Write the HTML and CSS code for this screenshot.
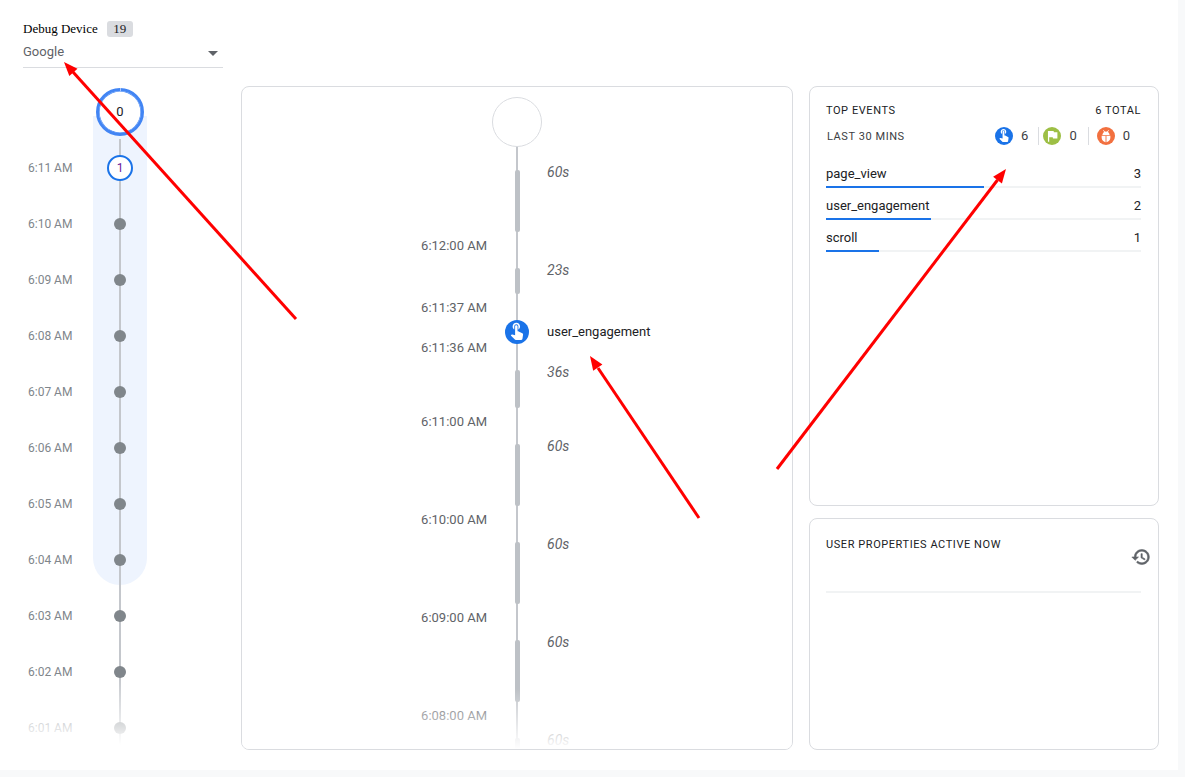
FILE: index.html
```html
<!DOCTYPE html>
<html lang="en">
<head>
<meta charset="utf-8">
<title>DebugView</title>
<link rel="stylesheet" href="styles.css">
</head>
<body>
<main class="page">
  <aside class="side">
    <div class="device-label"><span>Debug Device</span><span class="badge">19</span></div>
    <div class="device-select"><span>Google</span><span class="caret"></span></div>
    <div class="minutes">
      <div class="minute"><span class="min-time"></span><div class="min-rail band-first"><span class="zero">0</span></div></div>
      <div class="minute"><span class="min-time">6:11 AM</span><div class="min-rail band"><span class="one">1</span></div></div>
      <div class="minute"><span class="min-time">6:10 AM</span><div class="min-rail band"><span class="dot"></span></div></div>
      <div class="minute"><span class="min-time">6:09 AM</span><div class="min-rail band"><span class="dot"></span></div></div>
      <div class="minute"><span class="min-time">6:08 AM</span><div class="min-rail band"><span class="dot"></span></div></div>
      <div class="minute"><span class="min-time">6:07 AM</span><div class="min-rail band"><span class="dot"></span></div></div>
      <div class="minute"><span class="min-time">6:06 AM</span><div class="min-rail band"><span class="dot"></span></div></div>
      <div class="minute"><span class="min-time">6:05 AM</span><div class="min-rail band"><span class="dot"></span></div></div>
      <div class="minute"><span class="min-time">6:04 AM</span><div class="min-rail band-last"><span class="dot"></span></div></div>
      <div class="minute"><span class="min-time">6:03 AM</span><div class="min-rail"><span class="dot"></span></div></div>
      <div class="minute"><span class="min-time">6:02 AM</span><div class="min-rail"><span class="dot"></span></div></div>
      <div class="minute"><span class="min-time">6:01 AM</span><div class="min-rail"><span class="dot"></span></div></div>
    </div>
  </aside>

  <section class="card stream">
    <div class="start"><span class="start-circle"></span></div>
    <div class="seg seg-60"><span class="stamp">6:12:00 AM</span><div class="rail"><span class="bar"></span></div><span class="dur">60s</span></div>
    <div class="seg seg-23"><span class="stamp">6:11:37 AM</span><div class="rail"><span class="bar"></span></div><span class="dur">23s</span></div>
    <div class="seg seg-event"><span class="stamp">6:11:36 AM</span><div class="rail">
      <svg class="event-icon" viewBox="0 0 24 24"><circle cx="12" cy="12" r="12" fill="#1a73e8"/><g transform="translate(1.9 .24) scale(.82)"><path fill="#fff" d="M9 11.24V7.5C9 6.12 10.12 5 11.5 5S14 6.12 14 7.5v3.74c1.21-.81 2-2.18 2-3.74C16 5.01 13.99 3 11.5 3S7 5.01 7 7.5c0 1.56.79 2.93 2 3.74zm9.84 4.63l-4.54-2.26c-.17-.07-.35-.11-.54-.11H13v-6c0-.83-.67-1.5-1.5-1.5S10 6.67 10 7.5v10.74l-3.43-.72c-.08-.01-.15-.03-.24-.03-.31 0-.59.13-.79.33l-.79.8 4.94 4.94c.27.27.65.44 1.06.44h6.79c.75 0 1.33-.55 1.44-1.28l.75-5.27c.01-.07.02-.14.02-.2 0-.62-.38-1.16-.91-1.38z"/></g></svg>
    </div><span class="event-name">user_engagement</span></div>
    <div class="seg seg-36"><span class="stamp">6:11:00 AM</span><div class="rail"><span class="bar"></span></div><span class="dur">36s</span></div>
    <div class="seg seg-60"><span class="stamp">6:10:00 AM</span><div class="rail"><span class="bar"></span></div><span class="dur">60s</span></div>
    <div class="seg seg-60"><span class="stamp">6:09:00 AM</span><div class="rail"><span class="bar"></span></div><span class="dur">60s</span></div>
    <div class="seg seg-60"><span class="stamp">6:08:00 AM</span><div class="rail"><span class="bar"></span></div><span class="dur">60s</span></div>
    <div class="seg seg-60"><span class="stamp"></span><div class="rail"><span class="bar"></span></div><span class="dur">60s</span></div>
  </section>

  <div class="panels">
    <section class="card top-events">
      <div class="head-row"><span class="title">TOP EVENTS</span><span class="title">6 TOTAL</span></div>
      <div class="stats-row">
        <span class="subtitle">LAST 30 MINS</span>
        <div class="stats">
          <div class="stat stat-a">
            <svg class="stat-icon" viewBox="0 0 24 24"><circle cx="12" cy="12" r="12" fill="#1a73e8"/><g transform="translate(1.9 .24) scale(.82)"><path fill="#fff" d="M9 11.24V7.5C9 6.12 10.12 5 11.5 5S14 6.12 14 7.5v3.74c1.21-.81 2-2.18 2-3.74C16 5.01 13.99 3 11.5 3S7 5.01 7 7.5c0 1.56.79 2.93 2 3.74zm9.84 4.63l-4.54-2.26c-.17-.07-.35-.11-.54-.11H13v-6c0-.83-.67-1.5-1.5-1.5S10 6.67 10 7.5v10.74l-3.43-.72c-.08-.01-.15-.03-.24-.03-.31 0-.59.13-.79.33l-.79.8 4.94 4.94c.27.27.65.44 1.06.44h6.79c.75 0 1.33-.55 1.44-1.28l.75-5.27c.01-.07.02-.14.02-.2 0-.62-.38-1.16-.91-1.38z"/></g></svg>
            <span>6</span>
          </div>
          <div class="stat stat-b">
            <svg class="stat-icon" viewBox="0 0 24 24"><circle cx="12" cy="12" r="12" fill="#9dbf45"/><g transform="translate(2.4 2) scale(.84)"><path fill="#fff" d="M14.4 6L14 4H5v17h2v-7h5.6l.4 2h7V6z"/></g></svg>
            <span>0</span>
          </div>
          <div class="stat stat-c">
            <svg class="stat-icon" viewBox="0 0 24 24"><circle cx="12" cy="12" r="12" fill="#f2703f"/><path class="bug-legs" d="M8.6 4.4L10.2 6.6M15.4 4.4L13.8 6.6"/><path fill="#fff" d="M7.2 10.6c0-2.6 2.1-4.7 4.8-4.7s4.8 2.1 4.8 4.7z"/><path fill="#fff" d="M6.2 11.8h11.6v2.6c0 3.3-2.6 5.8-5.8 5.8s-5.8-2.5-5.8-5.8z"/><rect x="11.4" y="11.8" width="1.2" height="8.4" fill="#f2703f"/></svg>
            <span>0</span>
          </div>
        </div>
      </div>
      <ul class="event-list">
        <li class="event-row"><div class="event-line"><span>page_view</span><span>3</span></div><div class="track"><div class="fill" style="width:50%"></div></div></li>
        <li class="event-row"><div class="event-line"><span>user_engagement</span><span>2</span></div><div class="track"><div class="fill" style="width:33.33%"></div></div></li>
        <li class="event-row"><div class="event-line"><span>scroll</span><span>1</span></div><div class="track"><div class="fill" style="width:16.67%"></div></div></li>
      </ul>
    </section>
    <section class="card user-props">
      <div class="props-head">
        <span class="title">USER PROPERTIES ACTIVE NOW</span>
        <svg class="history" viewBox="0 0 24 24"><path class="history-path" d="M13 3c-4.97 0-9 4.03-9 9H1l3.89 3.89.07.14L9 12H6c0-3.87 3.13-7 7-7s7 3.13 7 7-3.13 7-7 7c-1.93 0-3.68-.79-4.94-2.06l-1.42 1.42C8.27 19.99 10.51 21 13 21c4.97 0 9-4.03 9-9s-4.03-9-9-9zm-1 5v5l4.28 2.54.72-1.21-3.5-2.08V8H12z"/></svg>
      </div>
      <div class="track props-rule"></div>
    </section>
  </div>
</main>

<svg class="arrows" viewBox="0 0 1185 777" width="1185" height="777">
  <line x1="296" y1="319" x2="73" y2="72" class="arrow-line"/>
  <polygon points="64,62 69.3,76.1 77.5,68.7" class="arrow-head"/>
  <line x1="699" y1="518" x2="598" y2="368" class="arrow-line"/>
  <polygon points="590,356 593.2,370.7 602.4,364.5" class="arrow-head"/>
  <line x1="777" y1="469" x2="997.5" y2="180" class="arrow-line"/>
  <polygon points="1006,169 993.1,176.8 1001.9,183.4" class="arrow-head"/>
</svg>
</body>
</html>
```

FILE: styles.css
```css
* { box-sizing: border-box; }
html, body { margin: 0; padding: 0; }
body {
  width: 1185px;
  height: 777px;
  overflow: hidden;
  position: relative;
  background: #f8f9fa;
  font-family: Roboto, "Liberation Sans", sans-serif;
  color: #202124;
}
.page {
  width: 1178px;
  height: 770px;
  background: #fff;
  display: flex;
}

/* left column */
.side { width: 241px; flex: none; padding-top: 21px; }
.device-label {
  margin-left: 23px;
  display: flex;
  align-items: center;
  gap: 9px;
  height: 16px;
  font: 13px "Liberation Serif", serif;
  color: #000;
}
.badge {
  width: 26px;
  height: 16px;
  line-height: 16px;
  text-align: center;
  background: #dadce0;
  border-radius: 3px;
  color: #202124;
}
.device-select {
  margin: 5px 0 0 23px;
  width: 200px;
  height: 26px;
  padding: 0 5px 5px 0;
  line-height: 20px;
  font-size: 13px;
  color: #5f6368;
  border-bottom: 1px solid #dadce0;
  display: flex;
  justify-content: space-between;
  align-items: center;
}
.caret {
  width: 0;
  height: 0;
  border-left: 5px solid transparent;
  border-right: 5px solid transparent;
  border-top: 5px solid #5f6368;
  margin-top: 2px;
}
.minutes {
  position: relative;
  margin-top: 16px;
  height: 661px;
  overflow: hidden;
  padding-left: 28px;
}
.minutes::before {
  content: "";
  position: absolute;
  z-index: 1;
  left: 119px;
  top: 55px;
  bottom: 0;
  width: 2px;
  background: #c4c7cc;
}
.minutes::after {
  content: "";
  position: absolute;
  z-index: 3;
  left: 0;
  right: 0;
  bottom: 0;
  height: 68px;
  background: linear-gradient(rgba(255,255,255,0), #fff);
}
.minute {
  display: grid;
  grid-template-columns: 65px 54px;
  height: 56px;
}
.min-time { line-height: 56px; font-size: 12px; color: #80868b; }
.min-rail {
  display: flex;
  align-items: center;
  justify-content: center;
}
.band { background: #eef4fe; }
.band-first { background: linear-gradient(transparent 58%, #eef4fe 58%); }
.band-last {
  height: 53px;
  background: #eef4fe;
  border-radius: 0 0 27px 27px;
  align-items: flex-start;
  padding-top: 22px;
}
.dot, .one, .zero { position: relative; z-index: 2; border-radius: 50%; }
.dot { width: 12px; height: 12px; background: #80868b; }
.one {
  width: 26px;
  height: 26px;
  background: #fff;
  border: 2px solid #1a73e8;
  text-align: center;
  line-height: 22px;
  font-size: 12px;
  color: #6a1b9a;
}
.zero {
  width: 48px;
  height: 48px;
  background: #fff;
  border: 3px solid #4285f4;
  box-shadow: inset 0 0 0 .6px #4285f4;
  text-align: center;
  line-height: 42px;
  font-size: 13px;
  color: #202124;
}
.zero::before {
  content: "";
  position: absolute;
  left: 50%;
  top: -3px;
  width: 1px;
  height: 3px;
  background: #a9c6fa;
}

/* cards */
.card {
  border: 1px solid #dadce0;
  border-radius: 8px;
  background: #fff;
}

/* stream */
.stream {
  position: relative;
  overflow: hidden;
  width: 552px;
  height: 664px;
  margin-top: 86px;
  flex: none;
  padding-top: 10px;
}
.stream::after {
  content: "";
  position: absolute;
  left: 0;
  right: 0;
  bottom: 0;
  height: 60px;
  background: linear-gradient(rgba(255,255,255,0), #fff);
}
.start {
  height: 51px;
  margin-left: 245px;
  width: 60px;
  display: flex;
  justify-content: center;
  align-items: flex-start;
  background: linear-gradient(#c4c7cc, #c4c7cc) center bottom / 2px 2px no-repeat;
}
.start-circle {
  width: 50px;
  height: 50px;
  border: 1px solid #dadce0;
  border-radius: 50%;
}
.seg {
  display: grid;
  grid-template-columns: 245px 60px 1fr;
  font-size: 13px;
}
.seg-60 { height: 98px; }
.seg-23 { height: 62px; }
.seg-36 { height: 74px; }
.seg-event { height: 40px; }
.stamp {
  align-self: end;
  text-align: right;
  line-height: 20px;
  height: 20px;
  margin-bottom: -10px;
  color: #5f6368;
  position: relative;
}
.rail {
  display: flex;
  flex-direction: column;
  align-items: center;
  background: linear-gradient(#c4c7cc, #c4c7cc) center / 2px 100% no-repeat;
}
.bar {
  flex: 1;
  width: 5px;
  margin: 22px 0 14px;
  border-radius: 2px;
  background: #bdc1c6;
}
.dur {
  margin-top: 14px;
  line-height: 20px;
  height: 20px;
  font-size: 14px;
  font-style: italic;
  color: #5f6368;
}
.event-icon { width: 24px; height: 24px; margin-top: 12px; display: block; }
.event-name { margin-top: 14px; line-height: 20px; height: 20px; color: #202124; }

/* right panels */
.panels {
  width: 350px;
  margin: 86px 0 0 16px;
  flex: none;
  display: flex;
  flex-direction: column;
  gap: 12px;
}
.top-events { height: 420px; padding: 15px 17px 0 16px; }
.user-props { height: 232px; padding: 17px 17px 0 16px; }
.head-row { display: flex; justify-content: space-between; line-height: 18px; }
.title { font-size: 11px; font-weight: 400; letter-spacing: .57px; line-height: 18px; color: #202124; }
.stats-row { display: flex; justify-content: space-between; align-items: center; height: 18px; margin-top: 7px; }
.subtitle { margin-left: 1px; font-size: 11px; font-weight: 400; letter-spacing: .57px; color: #3c4043; }
.stats { display: flex; padding-right: 11px; font-size: 13px; line-height: 18px; color: #3c4043; }
.stat { display: flex; height: 18px; }
.stat-icon { width: 18px; height: 18px; display: block; }
.stat span { margin-left: 8px; }
.stat-a { border-right: 1px solid #dadce0; padding-right: 10px; margin-right: 4px; }
.stat-b { border-right: 1px solid #dadce0; padding-right: 11px; margin-right: 8px; }
.event-list { list-style: none; margin: 19px 0 0; padding: 0; }
.event-row { margin-bottom: 8px; }
.event-line { display: flex; justify-content: space-between; font-size: 13px; line-height: 20px; color: #202124; }
.track { height: 2px; margin-top: 2px; background: #f1f3f4; }
.fill { height: 2px; background: #1a73e8; }
.props-head { display: flex; justify-content: space-between; align-items: flex-start; height: 31px; }
.history { width: 20px; height: 20px; margin: 11px -10px 0 0; flex: none; overflow: visible; }
.history-path { fill: #5f6368; stroke: #5f6368; stroke-width: .7; }
.bug-legs { stroke: #fff; stroke-width: 1.3; fill: none; }
.props-rule { margin-top: 24px; }

/* annotations */
.arrows { position: absolute; z-index: 10; left: 0; top: 0; pointer-events: none; }
.arrow-line { stroke: #f00; stroke-width: 3; }
.arrow-head { fill: #f00; }
```
